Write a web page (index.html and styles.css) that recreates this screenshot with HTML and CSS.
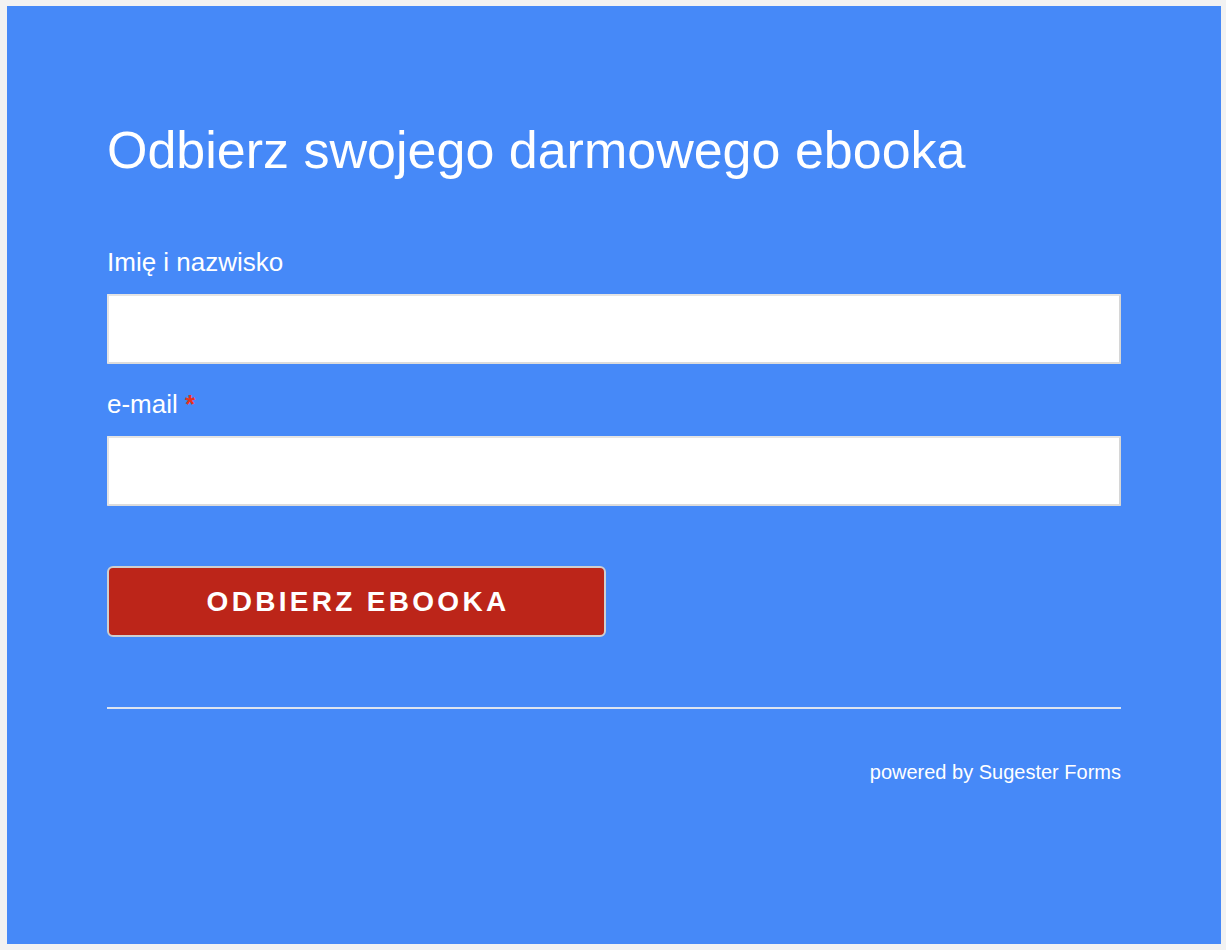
FILE: index.html
```html
<!DOCTYPE html>
<html lang="pl">
<head>
<meta charset="utf-8">
<title>Odbierz swojego darmowego ebooka</title>
<link rel="stylesheet" href="styles.css">
</head>
<body>
<div class="panel">
  <form class="form">
    <h1 class="title">Odbierz swojego darmowego ebooka</h1>
    <div class="field first">
      <label class="label">Imię i nazwisko</label>
      <input class="input" type="text">
    </div>
    <div class="field">
      <label class="label">e-mail <span class="req">*</span></label>
      <input class="input" type="email">
    </div>
    <button class="submit" type="button">ODBIERZ EBOOKA</button>
    <hr class="divider">
    <div class="powered">powered by Sugester Forms</div>
  </form>
</div>
</body>
</html>
```

FILE: styles.css
```css
html, body {
  margin: 0;
  padding: 0;
}
body {
  background: #f2f2f2;
  padding: 6px 5px 6px 7px;
  font-family: "Liberation Sans", Arial, sans-serif;
  color: #ffffff;
}
.panel {
  background: #4689f8;
  height: 938px;
  box-sizing: border-box;
  padding: 114px 100px 0 100px;
}
.form {
  display: flex;
  flex-direction: column;
}
.title {
  margin: 0;
  font-size: 52px;
  line-height: 60px;
  font-weight: normal;
}
.field {
  display: flex;
  flex-direction: column;
  margin-top: 25px;
}
.field.first {
  margin-top: 67px;
}
.label {
  font-size: 26px;
  line-height: 30px;
  margin-bottom: 17px;
}
.req {
  color: #e8321e;
  font-weight: bold;
}
.input {
  box-sizing: border-box;
  height: 70px;
  width: 100%;
  margin: 0;
  background: #ffffff;
  border: 2px solid #e4e4e4;
  border-right-color: #d6d6d6;
  border-bottom-color: #dcdcdc;
  border-radius: 1px;
}
.submit {
  box-sizing: border-box;
  margin-top: 60px;
  width: 499px;
  height: 71px;
  background: #bc2519;
  border: 2px solid #cfcfcf;
  border-radius: 6px;
  color: #ffffff;
  font-family: "Liberation Sans", Arial, sans-serif;
  font-weight: bold;
  font-size: 28px;
  letter-spacing: 3.3px;
  padding: 0 0 0 3px;
  cursor: pointer;
}
.divider {
  margin: 70px 0 0 0;
  border: 0;
  height: 2px;
  background: #dde4f0;
}
.powered {
  margin-top: 52px;
  text-align: right;
  font-size: 20px;
  line-height: 23px;
}
```
